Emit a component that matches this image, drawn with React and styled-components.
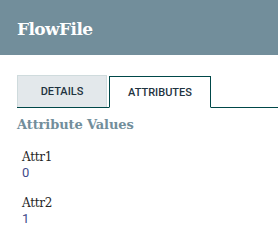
import React from "react";
import styled, { createGlobalStyle } from "styled-components";

const Global = createGlobalStyle`
  html, body { margin: 0; padding: 0; background: #ffffff; }
  body { font-family: Roboto, "Liberation Sans", sans-serif; }
`;

const Page = styled.div`
  width: 278px;
  height: 241px;
  overflow: hidden;
  background: #fff;
`;

const Header = styled.div`
  height: 55px;
  background: #728e9b;
  display: flex;
  align-items: flex-start;
  padding: 0 0 0 17px;
  box-sizing: border-box;
`;

const Title = styled.h1`
  margin: 0;
  padding-top: 19px;
  font-family: "DejaVu Serif", serif;
  font-weight: 700;
  font-size: 17px;
  line-height: 20px;
  color: #ffffff;
  letter-spacing: -0.6px;
`;

const Body = styled.div`
  padding: 20px 0 0 17px;
`;

const TabBar = styled.div`
  display: flex;
  gap: 2px;
  height: 33px;
  border-bottom: 1px solid #004849;
  box-sizing: border-box;
`;

const Tab = styled.div`
  width: ${(p) => p.$w}px;
  box-sizing: border-box;
  display: flex;
  align-items: center;
  justify-content: center;
  font-family: Roboto, sans-serif;
  font-size: 11px;
  font-weight: 500;
  color: #1f3340;
  text-transform: uppercase;
  background: ${(p) => (p.$active ? "#ffffff" : "#e3e8eb")};
  border: 1px solid ${(p) => (p.$active ? "#004849" : "#cfdbdd")};
  border-bottom: ${(p) => (p.$active ? "1px solid #ffffff" : "none")};
  margin-top: ${(p) => (p.$active ? "1px" : "0")};
  margin-bottom: ${(p) => (p.$active ? "-1px" : "0")};
`;

const SectionTitle = styled.div`
  margin-top: 9px;
  font-family: "DejaVu Serif", serif;
  font-weight: 700;
  font-size: 13px;
  line-height: 16px;
  color: #728e9b;
  letter-spacing: -0.1px;
`;

const List = styled.div`
  padding: 16px 0 0 5px;
  display: flex;
  flex-direction: column;
  gap: 15px;
`;

const Item = styled.div`
  display: flex;
  flex-direction: column;
`;

const Name = styled.div`
  font-family: "DejaVu Serif", serif;
  font-size: 12px;
  line-height: 16px;
  color: #262626;
  letter-spacing: -0.3px;
`;

const Value = styled.div`
  font-family: Roboto, sans-serif;
  font-size: 13px;
  line-height: 15px;
  color: #3f4a8a;
`;

const attrs = [
  { name: "Attr1", value: "0" },
  { name: "Attr2", value: "1" },
];

export default function App() {
  return (
    <Page>
      <Global />
      <Header>
        <Title>FlowFile</Title>
      </Header>
      <Body>
        <TabBar>
          <Tab $w={90}>Details</Tab>
          <Tab $w={102} $active>
            Attributes
          </Tab>
        </TabBar>
        <SectionTitle>Attribute Values</SectionTitle>
        <List>
          {attrs.map((a) => (
            <Item key={a.name}>
              <Name>{a.name}</Name>
              <Value>{a.value}</Value>
            </Item>
          ))}
        </List>
      </Body>
    </Page>
  );
}
